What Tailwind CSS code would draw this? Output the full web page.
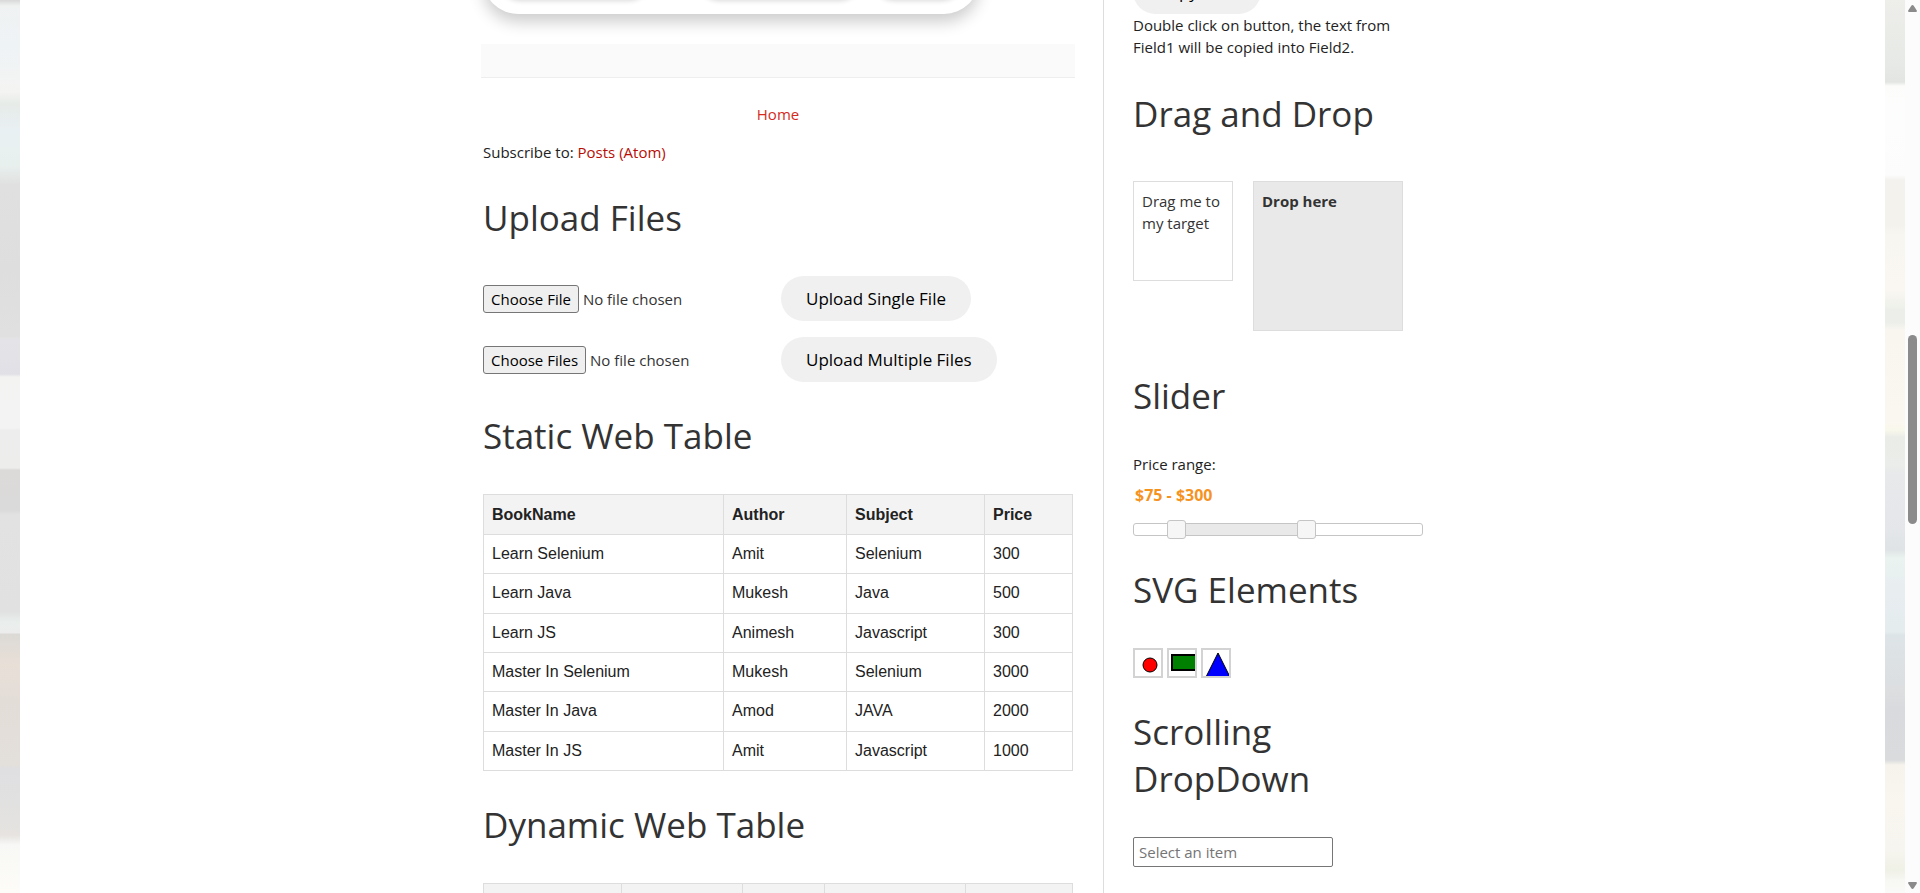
<!DOCTYPE html>
<html lang="en">
<head>
<meta charset="utf-8">
<title>Automation Testing Practice</title>
<script src="https://cdn.jsdelivr.net/npm/@tailwindcss/browser@4"></script>
</head>
<body class="h-screen overflow-hidden bg-[#fcfcfc] font-['Open_Sans','Noto_Sans',sans-serif] text-[15px] leading-[22px] text-[#222222]">
<div class="flex h-full">
  <!-- Soft bokeh strip, left -->
  <div class="w-5 shrink-0 bg-[linear-gradient(to_bottom,#d8d8d8_0px,#f0f2f2_6px,#eef3f6_45px,#f4f4f2_92px,#e6ebe8_104px,#e9f0f3_130px,#e8f0ee_165px,#e0e0e0_185px,#dedede_270px,#e0e0e0_336px,#e4e4e8_340px,#e0e0e6_374px,#f3f3f2_377px,#f3f3f4_428px,#ededed_430px,#ededec_468px,#dcdad9_470px,#dadada_510px,#e2e2e2_515px,#e1e1e1_612px,#e9efec_622px,#ececec_633px,#dcdad6_634px,#e8dfd7_665px,#e3ddd8_700px,#e3dfda_765px,#dfdfe2_769px,#e3e2e0_820px,#e6e3e0_835px,#f8f8f6_845px,#fdfcf8_893px)]"></div>

  <div class="flex min-w-0 grow justify-center bg-white">
    <main class="w-[594px] shrink-0">
      <div class="-mt-[56px] mr-[96px] ml-[2px] flex h-[70px] items-end rounded-[35px] bg-white px-[15px] pb-[15px] shadow-[0_8px_16px_rgba(0,0,0,0.2)]">
        <div class="h-[45px] w-[154px] rounded-full shadow-[0_2px_5px_rgba(0,0,0,0.15)]"></div>
        <div class="ml-[46px] h-[45px] w-[166px] rounded-full shadow-[0_2px_5px_rgba(0,0,0,0.15)]"></div>
        <div class="ml-[10px] h-[45px] w-[92px] rounded-full shadow-[0_2px_5px_rgba(0,0,0,0.15)]"></div>
      </div>
      <div class="mt-[30px] h-[34px] border-b border-[#eeeeee] bg-[#fafafa]"></div>
      <nav class="mt-[25px] text-center"><a href="#" class="text-[#d52a1d]">Home</a></nav>

      <div class="px-[2px]">
        <p class="mt-4">Subscribe to: <a href="#" class="text-[#b80d03]">Posts (Atom)</a></p>

        <h2 class="mt-[31px] mb-[35px] text-[35px] leading-[47px] text-[#333333]">Upload Files</h2>
        <form class="flex flex-col items-start gap-4" onsubmit="return false">
          <div class="flex items-center">
            <input type="file" aria-label="Single file" class="w-[298px] text-[15px] leading-[22px] text-[#333333] file:mr-1 file:h-7 file:rounded-[3px] file:border file:border-solid file:border-[#767676] file:bg-[#efefef] file:px-[7px] file:text-black">
            <button class="h-[45px] rounded-full bg-[#f0f0f0] px-[25px] text-[17px] text-black">Upload Single File</button>
          </div>
          <div class="flex items-center">
            <input type="file" multiple aria-label="Multiple files" class="w-[298px] text-[15px] leading-[22px] text-[#333333] file:mr-1 file:h-7 file:rounded-[3px] file:border file:border-solid file:border-[#767676] file:bg-[#efefef] file:px-[7px] file:text-black">
            <button class="h-[45px] rounded-full bg-[#f0f0f0] px-[25px] text-[17px] text-black">Upload Multiple Files</button>
          </div>
        </form>

        <h2 class="mt-[30px] mb-[35px] text-[35px] leading-[47px] text-[#333333]">Static Web Table</h2>
        <table class="h-[277px] w-full table-fixed border-collapse text-left font-['Liberation_Sans',Arial,sans-serif] text-base leading-[22px] [&_td]:border [&_td]:border-[#dddddd] [&_td]:px-2 [&_th]:border [&_th]:border-[#dddddd] [&_th]:px-2">
          <colgroup><col class="w-[240px]"><col class="w-[123px]"><col class="w-[138px]"><col></colgroup>
          <thead><tr class="h-10 bg-[#f3f3f3]"><th>BookName</th><th>Author</th><th>Subject</th><th>Price</th></tr></thead>
          <tbody>
            <tr><td>Learn Selenium</td><td>Amit</td><td>Selenium</td><td>300</td></tr>
            <tr><td>Learn Java</td><td>Mukesh</td><td>Java</td><td>500</td></tr>
            <tr><td>Learn JS</td><td>Animesh</td><td>Javascript</td><td>300</td></tr>
            <tr><td>Master In Selenium</td><td>Mukesh</td><td>Selenium</td><td>3000</td></tr>
            <tr><td>Master In Java</td><td>Amod</td><td>JAVA</td><td>2000</td></tr>
            <tr><td>Master In JS</td><td>Amit</td><td>Javascript</td><td>1000</td></tr>
          </tbody>
        </table>

        <h2 class="mt-[30px] mb-[35px] text-[35px] leading-[47px] text-[#333333]">Dynamic Web Table</h2>
        <table class="w-full table-fixed border-collapse [&_th]:border [&_th]:border-[#dddddd]">
          <colgroup><col class="w-[138px]"><col class="w-[121px]"><col class="w-[82px]"><col class="w-[141px]"><col></colgroup>
          <thead><tr class="h-10 bg-[#f3f3f3]"><th></th><th></th><th></th><th></th><th></th></tr></thead>
        </table>
      </div>
    </main>

    <aside class="ml-7 w-[321px] shrink-0 border-l border-[#dddddd] pl-[29px]">
      <button class="-mt-[31px] block h-[45px] rounded-full bg-[#f0f0f0] px-[25px] text-[17px] text-black">Copy Text</button>
      <p>Double click on button, the text from Field1 will be copied into Field2.</p>

      <h2 class="mt-8 mb-11 text-[35px] leading-[47px] text-[#333333]">Drag and Drop</h2>
      <div class="flex items-start gap-5 text-[#333333]">
        <div draggable="true" class="h-[100px] w-[100px] border border-[#dddddd] py-2 pl-2">Drag me to my target</div>
        <div class="h-[150px] w-[150px] border border-[#dddddd] bg-[#e9e9e9] p-2 font-bold">Drop here</div>
      </div>

      <h2 class="mt-[41px] mb-[34px] text-[35px] leading-[47px] text-[#333333]">Slider</h2>
      <label for="amount" class="block">Price range:</label>
      <input id="amount" readonly value="$75 - $300" class="mt-[9px] block h-[22px] w-[180px] px-[2px] text-base leading-[22px] font-bold text-[#f6931f]">
      <div class="relative mt-[17px] h-[13px] w-[290px] rounded-[3px] border border-[#c5c5c5] bg-white">
        <div class="mr-[115px] ml-[43px] h-full bg-[#e9e9e9]"></div>
        <input type="range" aria-label="Minimum price" min="0" max="500" value="75" class="pointer-events-none absolute -top-1 -left-[10px] h-[19px] w-[307px] appearance-none bg-transparent [&::-webkit-slider-thumb]:pointer-events-auto [&::-webkit-slider-thumb]:h-[19px] [&::-webkit-slider-thumb]:w-[19px] [&::-webkit-slider-thumb]:appearance-none [&::-webkit-slider-thumb]:rounded-[3px] [&::-webkit-slider-thumb]:border [&::-webkit-slider-thumb]:border-solid [&::-webkit-slider-thumb]:border-[#c5c5c5] [&::-webkit-slider-thumb]:bg-[#f6f6f6]">
        <input type="range" aria-label="Maximum price" min="0" max="500" value="300" class="pointer-events-none absolute -top-1 -left-[10px] h-[19px] w-[307px] appearance-none bg-transparent [&::-webkit-slider-thumb]:pointer-events-auto [&::-webkit-slider-thumb]:h-[19px] [&::-webkit-slider-thumb]:w-[19px] [&::-webkit-slider-thumb]:appearance-none [&::-webkit-slider-thumb]:rounded-[3px] [&::-webkit-slider-thumb]:border [&::-webkit-slider-thumb]:border-solid [&::-webkit-slider-thumb]:border-[#c5c5c5] [&::-webkit-slider-thumb]:bg-[#f6f6f6]">
      </div>

      <h2 class="mt-[30px] mb-[35px] text-[35px] leading-[47px] text-[#333333]">SVG Elements</h2>
      <div class="flex gap-1">
        <svg class="h-[30px] w-[30px] border-2 border-[#d3d3d3]" viewBox="0 0 26 26"><circle cx="15" cy="15" r="7" fill="red" stroke="black"/></svg>
        <svg class="h-[30px] w-[30px] border-2 border-[#d3d3d3]" viewBox="0 0 26 26"><rect x="3" y="5" width="30" height="15" fill="green" stroke="black" stroke-width="2"/></svg>
        <svg class="h-[30px] w-[30px] border-2 border-[#d3d3d3]" viewBox="0 0 26 26"><polygon points="15,3 27,27 3,27" fill="blue" stroke="black"/></svg>
      </div>

      <h2 class="mt-[30px] mb-[35px] text-[35px] leading-[47px] text-[#333333]">Scrolling DropDown</h2>
      <input type="text" aria-label="Item" placeholder="Select an item" class="block h-[30px] w-[200px] rounded-[2px] border border-[#767676] px-[5px] placeholder:text-[#757575]">
    </aside>
  </div>

  <!-- Soft bokeh strip, right -->
  <div class="w-5 shrink-0 bg-[linear-gradient(to_bottom,#eeeeeb_0px,#eaece8_30px,#e6e9e5_65px,#e2e5e1_82px,#fcfdfb_86px,#fdfdfe_130px,#fcfcfc_175px,#f3f2ee_180px,#f4f2ec_225px,#f8f6f1_235px,#faf7f3_290px,#ecefe9_310px,#ebeee9_322px,#f9f6f0_330px,#faf7f1_420px,#f9f8ec_430px,#eaece7_437px,#eaede9_465px,#e7e9eb_475px,#e4e6ea_530px,#dfe3e5_550px,#eaf3f0_558px,#e8edf0_590px,#e4ecee_632px,#dde4e7_635px,#dcdee0_690px,#d9dadd_710px,#dadbdd_760px,#f5f3ec_765px,#f9f6f0_800px,#f7f5ef_850px,#eff0e6_870px,#f7f7f3_880px,#fafaf8_893px)]"></div>

  <!-- Scrollbar -->
  <div class="flex w-[15px] shrink-0 flex-col items-center bg-[#fcfcfc] pt-[5px] pb-1">
    <svg class="h-[7px] w-[9px]" viewBox="0 0 9 7"><path d="M4.5 0Q5.2 0 5.7.8L8.8 5.6Q9.2 7 8 7H1Q-.2 7 .2 5.6L3.3.8Q3.8 0 4.5 0Z" fill="#8b8b8b"/></svg>
    <div class="mt-[323px] h-[189px] w-[9px] rounded-full bg-[#8b8b8b]"></div>
    <svg class="mt-auto h-[7px] w-[9px]" viewBox="0 0 9 7"><path d="M4.5 7Q5.2 7 5.7 6.2L8.8 1.4Q9.2 0 8 0H1Q-.2 0 .2 1.4L3.3 6.2Q3.8 7 4.5 7Z" fill="#8b8b8b"/></svg>
  </div>
</div>
</body>
</html>
